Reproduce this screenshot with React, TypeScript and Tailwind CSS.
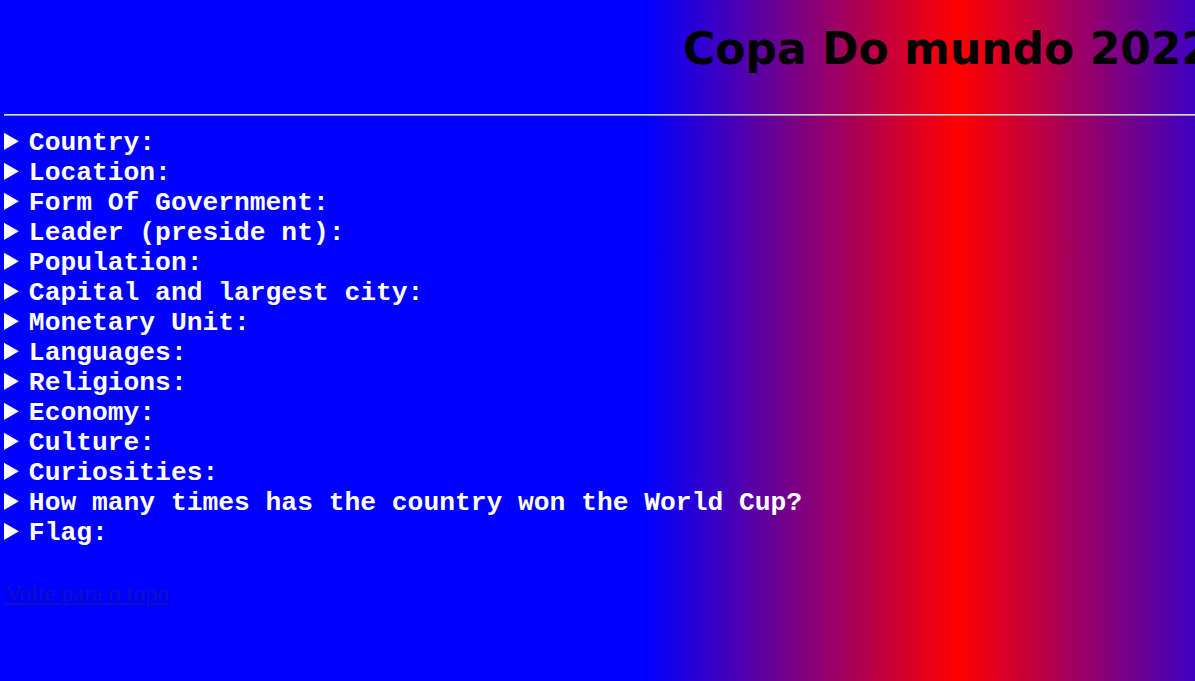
import React from 'react';

const topics = [
  'Country:',
  'Location:',
  'Form Of Government:',
  'Leader (preside nt):',
  'Population:',
  'Capital and largest city:',
  'Monetary Unit:',
  'Languages:',
  'Religions:',
  'Economy:',
  'Culture:',
  'Curiosities:',
  'How many times has the country won the World Cup?',
  'Flag:',
];

export default function App() {
  return (
    <div
      id="topo"
      className="min-h-screen w-full overflow-hidden bg-[linear-gradient(to_right,#0000ff_54%,#ff0000_80.2%,#0000ff_106.4%)]"
    >
      <header className="h-[114px] pl-[683px] whitespace-nowrap">
        <h1 className="pt-[27px] font-['Comic_Sans_MS','DejaVu_Sans',sans-serif] text-[44px] font-bold leading-none text-black">
          Copa Do mundo 2022
        </h1>
      </header>
      <hr className="ml-1 border-0 border-t border-b border-t-[#d8d8d8] border-b-[#9a9a9a]" />

      <div className="pl-1 pt-[12px] font-['Liberation_Mono','Courier_New',monospace] text-[26.3px] font-bold leading-[30px] text-white">
        {topics.map(t => (
          <details key={t}>
            <summary className="cursor-pointer whitespace-nowrap">
              <span className="-ml-[3px]">{t}</span>
            </summary>
          </details>
        ))}
      </div>

      <a
        href="#topo"
        className="mt-[27px] ml-[5px] inline-block font-['Liberation_Serif','Times_New_Roman',serif] text-[24px] text-[#1010c0] underline"
      >
        Volte para o topo
      </a>
    </div>
  );
}
